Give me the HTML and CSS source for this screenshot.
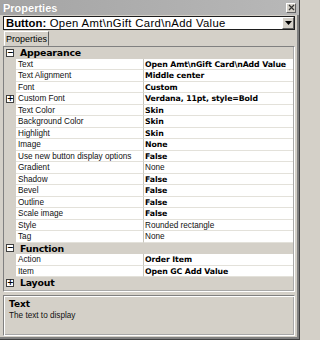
FILE: index.html
```html
<!DOCTYPE html>
<html>
<head>
<meta charset="utf-8">
<link rel="stylesheet" href="styles.css">
</head>
<body>
<div class="window">
  <div class="titlebar">
    <span class="title">Properties</span>
    <span class="close"><svg width="7" height="7" viewBox="0 0 7 7"><path d="M1 1L6 6M6 1L1 6" stroke="#333" stroke-width="1.2"/></svg></span>
  </div>
  <div class="combo">
    <span class="combo-text"><b>Button:</b> Open Amt\nGift Card\nAdd Value</span>
    <span class="drop"><svg width="7" height="4" viewBox="0 0 7 4"><path d="M0 0H7L3.5 4Z" fill="#000"/></svg></span>
  </div>
  <div class="tabs">
    <div class="tab">Properties</div>
  </div>
  <div class="grid">
    <div class="cat"><span class="exp">−</span><span class="catlabel">Appearance</span></div>
    <div class="row"><span class="m"></span><span class="n">Text</span><span class="v b">Open Amt\nGift Card\nAdd Value</span></div>
    <div class="row"><span class="m"></span><span class="n">Text Alignment</span><span class="v b">Middle center</span></div>
    <div class="row"><span class="m"></span><span class="n">Font</span><span class="v b">Custom</span></div>
    <div class="row"><span class="m"><span class="exp small">+</span></span><span class="n">Custom Font</span><span class="v b">Verdana, 11pt, style=Bold</span></div>
    <div class="row"><span class="m"></span><span class="n">Text Color</span><span class="v b">Skin</span></div>
    <div class="row"><span class="m"></span><span class="n">Background Color</span><span class="v b">Skin</span></div>
    <div class="row"><span class="m"></span><span class="n">Highlight</span><span class="v b">Skin</span></div>
    <div class="row"><span class="m"></span><span class="n">Image</span><span class="v b">None</span></div>
    <div class="row"><span class="m"></span><span class="n">Use new button display options</span><span class="v b">False</span></div>
    <div class="row"><span class="m"></span><span class="n">Gradient</span><span class="v">None</span></div>
    <div class="row"><span class="m"></span><span class="n">Shadow</span><span class="v b">False</span></div>
    <div class="row"><span class="m"></span><span class="n">Bevel</span><span class="v b">False</span></div>
    <div class="row"><span class="m"></span><span class="n">Outline</span><span class="v b">False</span></div>
    <div class="row"><span class="m"></span><span class="n">Scale image</span><span class="v b">False</span></div>
    <div class="row"><span class="m"></span><span class="n">Style</span><span class="v">Rounded rectangle</span></div>
    <div class="row"><span class="m"></span><span class="n">Tag</span><span class="v">None</span></div>
    <div class="cat"><span class="exp">−</span><span class="catlabel">Function</span></div>
    <div class="row"><span class="m"></span><span class="n">Action</span><span class="v b">Order Item</span></div>
    <div class="row"><span class="m"></span><span class="n">Item</span><span class="v b">Open GC Add Value</span></div>
    <div class="cat"><span class="exp">+</span><span class="catlabel">Layout</span></div>
  </div>
  <div class="desc">
    <div class="desc-title">Text</div>
    <div class="desc-text">The text to display</div>
  </div>
</div>
</body>
</html>
```
FILE: styles.css
```css
* { box-sizing: border-box; }
html, body { margin: 0; padding: 0; }
body {
  width: 300px;
  height: 340px;
  background: #d4d0c8;
  font-family: "Liberation Sans", Arial, sans-serif;
  overflow: hidden;
}
.window {
  width: 300px;
  height: 340px;
  background: #d4d0c8;
  border-right: 1px solid #404040;
  border-bottom: 1px solid #404040;
  box-shadow: inset -2px -2px 0 #808080;
  display: flex;
  flex-direction: column;
  padding: 0 4px 3px 3px;
}
.titlebar {
  height: 15px;
  margin: 0 -4px 0 -3px;
  background: linear-gradient(to right, #a4a4a4, #b8b8b8);
  display: flex;
  align-items: center;
  justify-content: space-between;
  padding: 0 3px 0 3px;
}
.title {
  color: #fff;
  font-weight: bold;
  font-size: 11px;
  font-family: "Liberation Sans", Arial, sans-serif;
  text-shadow: 0 0 1px #8a8a8a;
}
.close {
  width: 10px;
  height: 10px;
  background: #d4d0c8;
  border: 1px solid;
  border-color: #fff #606060 #606060 #fff;
  display: flex;
  align-items: center;
  justify-content: center;
}
.combo {
  margin-top: 1px;
  height: 14px;
  background: #fff;
  border: 1px solid #1e1e1e;
  display: flex;
  align-items: center;
  justify-content: space-between;
  padding-left: 2px;
}
.combo-text {
  font-size: 11.3px;
  white-space: nowrap;
  color: #000;
  letter-spacing: 0.35px;
}
.combo-text b { font-weight: bold; letter-spacing: 0; }
.drop {
  width: 12px;
  height: 12px;
  background: #d4d0c8;
  border: 1px solid;
  border-color: #fff #606060 #606060 #fff;
  display: flex;
  align-items: center;
  justify-content: center;
}
.tabs {
  height: 16px;
  display: flex;
  align-items: flex-end;
  padding-left: 1px;
}
.tab {
  height: 15px;
  width: 45px;
  border: 1px solid;
  border-color: #fff #606060 transparent #fff;
  font-size: 9px;
  display: flex;
  align-items: center;
  justify-content: center;
  color: #000;
}
.grid {
  height: 246px;
  border: 1px solid;
  border-color: #808080 #fff #fff #808080;
  box-shadow: inset -1px -1px 0 #a8a8a8;
  background: #d4d0c8;
  padding-right: 1px;
}
.row, .cat {
  height: 11.5px;
  display: flex;
  font-size: 8.2px;
  line-height: 11px;
}
.m {
  width: 12px;
  flex: none;
  position: relative;
}
.n {
  width: 128px;
  flex: none;
  background: #fff;
  border-bottom: 1px solid #e3e1da;
  border-right: 1px solid #c8c5bc;
  padding-left: 2px;
  white-space: nowrap;
  overflow: hidden;
  color: #111;
}
.v {
  flex: 1;
  background: #fff;
  border-bottom: 1px solid #e3e1da;
  padding-left: 1px;
  white-space: nowrap;
  overflow: hidden;
  color: #111;
}
.v.b {
  font-family: "DejaVu Sans", sans-serif;
  font-weight: bold;
  font-size: 7.8px;
  letter-spacing: -0.1px;
  color: #000;
}
.cat { align-items: center; }
.exp {
  width: 8px;
  height: 8px;
  margin: 0 2px 0 2px;
  border: 1px solid #404040;
  background: #fff;
  font-size: 8px;
  line-height: 6px;
  text-align: center;
  font-family: "DejaVu Sans", sans-serif;
  font-weight: bold;
  color: #000;
  flex: none;
}
.exp.small {
  position: absolute;
  left: 2px;
  top: 2px;
  margin: 0;
}
.catlabel {
  padding-left: 4px;
  font-family: "DejaVu Sans", sans-serif;
  font-weight: bold;
  font-size: 9.4px;
  letter-spacing: -0.2px;
  color: #000;
}
.desc {
  margin-top: 3px;
  flex: 1;
  border: 1px solid;
  border-color: #808080 #fff #fff #808080;
  box-shadow: inset 1px 1px 0 #fff, inset -1px -1px 0 #a8a8a8;
  padding: 2px 5px;
}
.desc-title {
  font-family: "DejaVu Sans", sans-serif;
  font-weight: bold;
  font-size: 9px;
  color: #000;
  line-height: 12px;
}
.desc-text {
  font-size: 8.2px;
  color: #111;
  line-height: 12px;
}
```
